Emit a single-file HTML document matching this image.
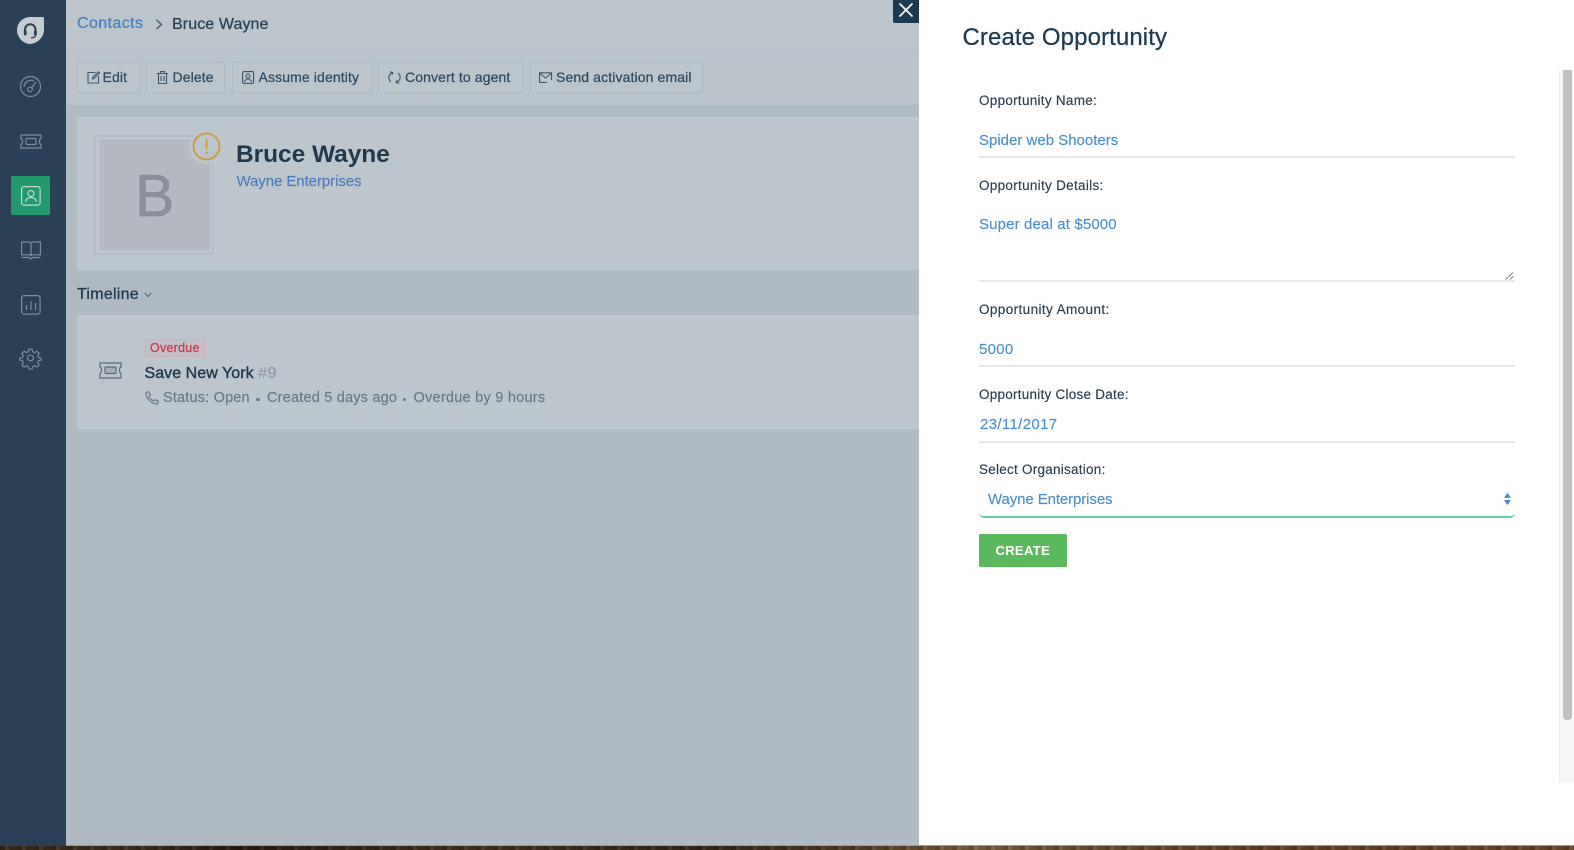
<!DOCTYPE html>
<html><head><meta charset="utf-8"><title>Create Opportunity</title>
<style>
*{box-sizing:border-box}
html,body{margin:0;padding:0;width:1574px;height:850px;overflow:hidden;background:#fff;font-family:"Liberation Sans",sans-serif}
.a{position:absolute}
.t{position:absolute;white-space:nowrap;line-height:20px;height:20px}
.btn{position:absolute;top:62px;height:31px;border:1.5px solid #aeb8c1;border-radius:2px;background:#bdc5cc}
.btxt{position:absolute;top:67px;line-height:20px;font-size:14px;color:#2f4a62;white-space:nowrap;letter-spacing:.12px;-webkit-text-stroke:.25px #2f4a62}
.lab{position:absolute;left:979px;font-size:13.5px;line-height:20px;color:#2b3d50;white-space:nowrap;letter-spacing:.25px;-webkit-text-stroke:.15px #2b3d50}
.val{position:absolute;left:979px;font-size:15px;line-height:20px;color:#4b8fcb;white-space:nowrap;letter-spacing:.05px;-webkit-text-stroke:.15px #4b8fcb}
.line{position:absolute;left:979px;width:536px;height:2px;background:#e4e8ec}
svg{position:absolute;overflow:visible;fill:none}
</style></head><body>
<!-- bottom strip -->
<div class="a" style="left:0;top:846px;width:1574px;height:4px;background:repeating-linear-gradient(90deg,rgba(0,0,0,.22) 0 5px,rgba(255,255,255,.05) 5px 9px,rgba(0,0,0,.1) 9px 17px),linear-gradient(90deg,#3a2a1a 0,#40301f 8%,#2a1d12 15%,#45331f 30%,#36281a 45%,#5a4228 55%,#7d6242 62%,#6f5233 68%,#654526 80%,#6b4a2a 100%)"></div>
<!-- main bg -->
<div class="a" style="left:66px;top:0;width:853px;height:845px;background:#afbac3"></div>
<div class="a" style="left:66px;top:0;width:853px;height:51px;background:#bec6cd;border-bottom:1px solid #b5bfc7"></div>
<div class="a" style="left:66px;top:51px;width:853px;height:55px;background:#bac2ca;border-bottom:1px solid #adb8c1"></div>
<!-- sidebar -->
<div class="a" style="left:0;top:0;width:66px;height:846px;background:#2a4056"></div>
<svg style="left:16px;top:15.500px" width="28" height="28" viewBox="0 0 28 28"><path d="M1 14C1 7 7 1 14 1H26.500C28 1 28 2 28 3V14C28 21 21 28 14 28C7 28 1 21 1 14Z" fill="#c5ccd2"/><path d="M9 17V13.500a5.250 5.250 0 0 1 10.500 0V17" stroke="#2a4056" stroke-width="2"/><rect x="7.800" y="14" width="2.800" height="5.500" rx="1.200" fill="#2a4056"/><rect x="18" y="14" width="2.800" height="5.500" rx="1.200" fill="#2a4056"/><path d="M19.500 19C19.500 21 17.500 21.800 15 21.800" stroke="#2a4056" stroke-width="1.300"/></svg>
<svg style="left:20px;top:76px" width="22" height="22" viewBox="0 0 22 22" stroke="#7d8c9a" stroke-width="1.200"><circle cx="10.500" cy="10.500" r="10"/><path d="M4 11a7 7 0 0 1 10-6"/><circle cx="10" cy="13.500" r="2.300"/><path d="M11.500 12L16 6"/></svg>
<svg style="left:20px;top:134px" width="22" height="15" viewBox="0 0 22 15" stroke="#7d8c9a" stroke-width="1.200"><path d="M1 1H21V4.500C19 5 19 9.500 21 10.500V14H1V10.500C3 9.500 3 5 1 4.500Z"/><rect x="6" y="4.500" width="10" height="6" rx="1"/></svg>
<div class="a" style="left:11px;top:176px;width:39px;height:39px;border-radius:2px;background:#239a6e"></div>
<svg style="left:21px;top:186px" width="20" height="20" viewBox="0 0 20 20" stroke="#c8d6d4" stroke-width="1.200"><rect x=".6" y=".6" width="18.500" height="18.500" rx="2.500"/><circle cx="10" cy="7.500" r="3"/><path d="M4.500 16c.5-3.500 3-4.500 5.500-4.500s5 1 5.500 4.500"/></svg>
<svg style="left:21px;top:241px" width="20" height="19" viewBox="0 0 20 19" stroke="#7d8c9a" stroke-width="1.200"><path d="M.6 1H8C9 1 10 2 10 3V15C10 14 9 13.800 8 13.800H.6ZM19.400 1H12C11 1 10 2 10 3V15C10 14 11 13.800 12 13.800H19.400ZM.6 16.500H8L10 18L12 16.500H19.400"/></svg>
<svg style="left:21px;top:295px" width="20" height="20" viewBox="0 0 20 20" stroke="#7d8c9a" stroke-width="1.200"><rect x=".6" y=".6" width="18.500" height="18.500" rx="2.500"/><path d="M5.500 10V15M10 6V15M14.500 8V15"/></svg>
<svg style="left:20px;top:348px" width="21" height="20" viewBox="0 0 24 24" stroke="#7d8c9a" stroke-width="1.400"><circle cx="12" cy="12" r="3.500"/><path d="M10 1.500h4l.6 3 2.400 1 2.600-1.700 2.800 2.800-1.700 2.600 1 2.400 3 .6v2.400l-3 .6-1 2.400 1.700 2.600-2.800 2.800-2.600-1.700-2.400 1-.6 3h-4l-.6-3-2.400-1-2.600 1.700-2.800-2.800 1.700-2.600-1-2.400-3-.6v-2.400l3-.6 1-2.400-1.700-2.600 2.800-2.800 2.600 1.700 2.400-1z"/></svg>
<!-- breadcrumb -->
<div class="t" style="left:77px;top:14px;font-size:16px;color:#4a84c4;letter-spacing:.4px;-webkit-text-stroke:.35px #4a84c4">Contacts</div>
<svg style="left:154.500px;top:19px" width="8" height="11" viewBox="0 0 8 11" stroke="#55697c" stroke-width="1.700"><path d="M1.500 1L6.500 5.500L1.500 10"/></svg>
<div class="t" style="left:172px;top:15px;font-size:16px;color:#2a4258;letter-spacing:.1px;-webkit-text-stroke:.3px #2a4258">Bruce Wayne</div>
<!-- toolbar -->
<div class="btn" style="left:77px;width:63px"></div>
<div class="btn" style="left:145.500px;width:79.500px"></div>
<div class="btn" style="left:232px;width:140px"></div>
<div class="btn" style="left:378px;width:145px"></div>
<div class="btn" style="left:530px;width:173px"></div>
<svg style="left:87px;top:71px" width="13" height="13" viewBox="0 0 13 13" stroke="#3d566c" stroke-width="1.100"><path d="M8.500 1.500H1V12H11.500V5M5.500 8L6 6L11.500 .8L12.500 1.800L7 7.500Z"/></svg>
<div class="btxt" style="left:102.500px">Edit</div>
<svg style="left:157px;top:71px" width="11" height="13" viewBox="0 0 11 13" stroke="#3d566c" stroke-width="1.100"><path d="M0 2.500H11M3.500 2.500V.6H7.500V2.500M1.500 2.500V12.500H9.500V2.500M4 5V10M7 5V10"/></svg>
<div class="btxt" style="left:172.500px">Delete</div>
<svg style="left:242px;top:71px" width="12" height="13" viewBox="0 0 12 13" stroke="#3d566c" stroke-width="1.100"><rect x=".6" y=".6" width="11" height="11.800" rx="1.500"/><circle cx="6" cy="5" r="2"/><path d="M2.500 11c.5-2.500 2-3 3.500-3s3 .5 3.500 3"/></svg>
<div class="btxt" style="left:258.500px">Assume identity</div>
<svg style="left:388px;top:71px" width="13" height="13" viewBox="0 0 13 13" stroke="#3d566c" stroke-width="1.100"><path d="M4.500 1.500A5.500 5.500 0 0 0 3 11M8.500 11.500A5.500 5.500 0 0 0 10 2M2 .8L4.800 1.500L4 4M11 12.200L8.200 11.500L9 9"/></svg>
<div class="btxt" style="left:405px">Convert to agent</div>
<svg style="left:539px;top:72px" width="13" height="12" viewBox="0 0 13 12" stroke="#3d566c" stroke-width="1.100"><path d="M8 10.500H.6V.8H12.500V8M.6 1L6.500 6L12.500 1"/></svg>
<div class="btxt" style="left:556px">Send activation email</div>
<!-- contact card -->
<div class="a" style="left:77px;top:117px;width:842px;height:154px;background:#bec6cd;border-radius:2px 0 0 2px;border-bottom:1px solid #b2bdc6"></div>
<div class="a" style="left:94px;top:135px;width:120px;height:120px;border:2px solid #b4bdc5;border-radius:3px"></div>
<div class="a" style="left:99.500px;top:140px;width:110px;height:110px;background:#b5bac2;border:1px solid #adb4bd;border-radius:1px"></div>
<div class="t" style="left:135px;top:166px;height:60px;line-height:60px;font-size:59px;color:#8a9099;-webkit-text-stroke:.7px #8a9099">B</div>
<div class="a" style="left:189px;top:129px;width:35px;height:35px;border-radius:50%;background:#bdc5cc"></div>
<svg style="left:192px;top:132px" width="29" height="29" viewBox="0 0 29 29" stroke="#cf9a35" stroke-width="1.800"><circle cx="14.500" cy="14.500" r="13"/><path d="M14.500 7V17M14.500 19.500V22"/></svg>
<div class="t" style="left:236px;top:140px;height:30px;line-height:30px;font-size:24.500px;font-weight:bold;color:#20394f;letter-spacing:-.05px">Bruce Wayne</div>
<div class="t" style="left:236.500px;top:172px;font-size:15px;color:#4a7dbd;letter-spacing:-.07px;-webkit-text-stroke:.15px #4a7dbd">Wayne Enterprises</div>
<!-- timeline -->
<div class="t" style="left:77px;top:285px;font-size:16px;color:#233c53;letter-spacing:.25px;-webkit-text-stroke:.3px #233c53">Timeline</div>
<svg style="left:144px;top:292px" width="8" height="6" viewBox="0 0 8 6" stroke="#54697c" stroke-width="1.100"><path d="M.8 1L4 4.500L7.200 1"/></svg>
<div class="a" style="left:77px;top:315px;width:842px;height:114.500px;background:#bec6cd;border-radius:2px 0 0 2px;border-bottom:1px solid #b2bdc6"></div>
<svg style="left:99px;top:362px" width="23" height="17" viewBox="0 0 23 17" stroke="#546a7d" stroke-width="1.200"><path d="M1 1H22V5C20 5.500 20 10.500 22 11.500V16H1V11.500C3 10.500 3 5.500 1 5Z"/><rect x="6" y="5" width="11" height="6.500" rx="1" fill="#a4afb9"/></svg>
<div class="a" style="left:144.500px;top:339px;width:60px;height:18px;background:#c4bec6;border:1px solid #ccb0b8;border-radius:2px"></div>
<div class="t" style="left:150px;top:338px;font-size:12.500px;color:#c9334a;letter-spacing:.25px;-webkit-text-stroke:.2px #c9334a">Overdue</div>
<div class="t" style="left:144.500px;top:364px;font-size:16px;color:#213a50;letter-spacing:.05px;-webkit-text-stroke:.4px #213a50">Save New York <span style="color:#8895a1;-webkit-text-stroke:0;letter-spacing:.4px">#9</span></div>
<svg style="left:145px;top:391px" width="14" height="14" viewBox="0 0 14 14" stroke="#64788a" stroke-width="1.100"><path d="M1 1.500L3.500 .8L5.500 3.800L4 5.200C5 7.500 6.500 9 8.800 10L10.200 8.500L13.200 10.500L12.500 13C7 13.500 .5 7 1 1.500Z"/></svg>
<div class="t" style="left:163px;top:388px;font-size:14.500px;color:#64788a;letter-spacing:.18px;-webkit-text-stroke:.15px #64788a">Status: Open</div>
<div class="a" style="left:256px;top:397.500px;width:3.500px;height:3.500px;border-radius:50%;background:#64788a"></div>
<div class="t" style="left:267px;top:388px;font-size:14.500px;color:#64788a;letter-spacing:.2px;-webkit-text-stroke:.15px #64788a">Created 5 days ago</div>
<div class="a" style="left:402.500px;top:397.500px;width:3.500px;height:3.500px;border-radius:50%;background:#64788a"></div>
<div class="t" style="left:413.500px;top:388px;font-size:14.500px;color:#64788a;letter-spacing:.25px;-webkit-text-stroke:.15px #64788a">Overdue by 9 hours</div>
<!-- close -->
<div class="a" style="left:892.500px;top:0;width:26.500px;height:23px;background:#1b3a52;border-radius:0 0 0 2px"></div>
<svg style="left:898.500px;top:3px" width="14" height="14" viewBox="0 0 14 14" stroke="#fff" stroke-width="1.700"><path d="M.5 .5L13.500 13.500M13.500 .5L.5 13.500"/></svg>
<!-- panel -->
<div class="a" style="left:919px;top:0;width:655px;height:846px;background:#fff"></div>
<div class="t" style="left:962.500px;top:23px;height:30px;line-height:30px;font-size:24px;color:#1e3a50;letter-spacing:.1px;-webkit-text-stroke:.25px #1e3a50">Create Opportunity</div>
<div class="lab" style="top:91px;letter-spacing:.28px">Opportunity Name:</div>
<div class="val" style="top:131px;letter-spacing:0">Spider web Shooters</div>
<div class="line" style="top:156px"></div>
<div class="lab" style="top:176px;letter-spacing:.3px">Opportunity Details:</div>
<div class="val" style="top:215px;letter-spacing:.14px">Super deal at $5000</div>
<div class="line" style="top:280px"></div>
<div class="lab" style="top:300px;letter-spacing:.4px">Opportunity Amount:</div>
<div class="val" style="top:339.500px;letter-spacing:.3px">5000</div>
<div class="line" style="top:365px"></div>
<div class="lab" style="top:385px;letter-spacing:.25px">Opportunity Close Date:</div>
<div class="val" style="left:980px;top:415px;letter-spacing:.35px">23/11/2017</div>
<div class="line" style="top:441px"></div>
<div class="lab" style="top:460px">Select Organisation:</div>
<div class="val" style="left:988px;top:490px;letter-spacing:-.1px">Wayne Enterprises</div>
<div class="a" style="left:979px;top:500px;width:536px;height:18px;border-bottom:2px solid #63d0a7;border-radius:0 0 5px 5px"></div>
<svg style="left:1504px;top:493px" width="7" height="12" viewBox="0 0 7 12"><path d="M3.500 0L7 4.800H0Z" fill="#4a86c6"/><path d="M3.500 12L7 7H0Z" fill="#4a86c6"/></svg>
<svg style="left:1505px;top:272px" width="9" height="8" viewBox="0 0 9 8" stroke="#7a7f85" stroke-width=".9"><path d="M.5 7.500L8 .5M5 7.500L8.500 4"/></svg>
<div class="a" style="left:979px;top:534px;width:87.500px;height:33px;background:#5cb85c;border-radius:1.500px;color:#fff;font-size:13px;font-weight:bold;line-height:33px;text-align:center;letter-spacing:.35px">CREATE</div>
<!-- scrollbar -->
<div class="a" style="left:1559px;top:70px;width:15px;height:713px;background:#f7f7f7;border-left:1px solid #eee"></div>
<div class="a" style="left:1563px;top:70px;width:9px;height:650px;background:#c1c1c1;border-radius:0 0 4px 4px"></div>
<div class="a" style="left:66px;top:845px;width:1508px;height:1px;background:#9a9d9e"></div>
</body></html>
